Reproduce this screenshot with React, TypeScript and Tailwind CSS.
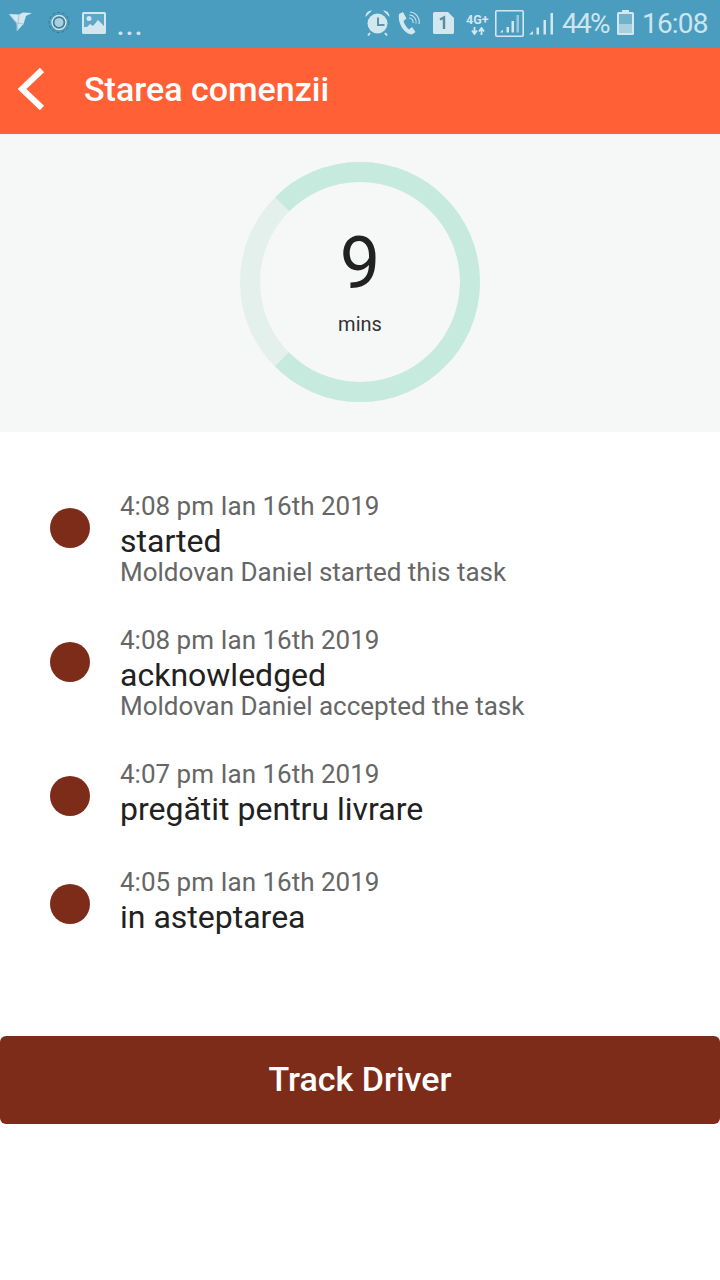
import React from "react";

const ICON = "#d3e7ef";
const DARK = "#5f93aa";

function Bird() {
  return (
    <svg width="24" height="28" viewBox="0 0 24 28" className="shrink-0">
      <path d="M0 4 L10 4.500 L14 2.500 L23 3 L17 6 L14.500 14 L8 21 L7.500 13 Z" fill={ICON} />
      <path d="M0 4 L7.500 13 L14.500 14 M10 4.500 L8 21" fill="none" stroke="#9cc8da" strokeWidth="1" />
    </svg>
  );
}
function Target() {
  return (
    <svg width="24" height="28" viewBox="0 0 24 28" className="shrink-0">
      <circle cx="12" cy="12.500" r="10" fill="none" stroke="#2f6f8a" strokeWidth="0.8" strokeDasharray="3 2" />
      <circle cx="12" cy="12.500" r="8" fill="#3c7f9c" />
      <circle cx="12" cy="12.500" r="7" fill="none" stroke={ICON} strokeWidth="1.500" />
      <circle cx="12" cy="12.500" r="4.500" fill="#a9d0e0" />
    </svg>
  );
}
function Picture() {
  return (
    <svg width="24" height="28" viewBox="0 0 24 28" className="shrink-0">
      <rect x="0" y="2" width="24" height="22" rx="1.500" fill={ICON} />
      <rect x="2" y="4" width="20" height="13" fill="#5ea8c7" />
      <circle cx="7" cy="8.500" r="2.500" fill={ICON} />
      <path d="M2 20 L8 14 L11 16 L16 10 L22 16 V22 H2 Z" fill={ICON} />
    </svg>
  );
}
function Alarm() {
  return (
    <svg width="26" height="28" viewBox="0 0 26 28" className="shrink-0">
      <circle cx="12.500" cy="13.500" r="10" fill={ICON} />
      <path d="M0.500 7 C0.500 3 3 0.500 7 0.500 Z M24.500 7 C24.500 3 22 0.500 18 0.500 Z" fill={ICON} />
      <path d="M5 23 L3 25.500 M20 23 L22 25.500" stroke={ICON} strokeWidth="2" />
      <path d="M13 7.500 V15 H19.500" fill="none" stroke={DARK} strokeWidth="2" />
    </svg>
  );
}
function Phone() {
  return (
    <svg width="24" height="28" viewBox="0 0 24 28" className="shrink-0">
      <path d="M2 4 L6 2 L9.500 8.500 L6.500 11 C7.500 14.500 9.500 17.500 12 19.500 L15 17 L18.500 22 L15 24.500 C7 24 0.500 13 2 4 Z" fill={ICON} />
      <path d="M12 8a4 4 0 0 1 4 5M12.500 5a7 7 0 0 1 6.500 8.500M13 2a10 10 0 0 1 9 12" fill="none" stroke={ICON} strokeWidth="1.100" />
    </svg>
  );
}
function Sim() {
  return (
    <svg width="21" height="28" viewBox="0 0 21 28" className="shrink-0">
      <path d="M1.500 2 H15 L21 8 V22.500 A1.500 1.500 0 0 1 19.500 24 H1.500 A1.500 1.500 0 0 1 0 22.500 V3.500 A1.500 1.500 0 0 1 1.500 2 Z" fill={ICON} />
      <path d="M7 9.500 L11 7.500 V19" fill="none" stroke="#5b8ba0" strokeWidth="2.400" />
    </svg>
  );
}
function Lte() {
  return (
    <div className="relative h-[28px] w-[26px] shrink-0">
      <span className="absolute left-0 top-[3px] font-['Roboto',sans-serif] text-[12.500px] leading-[13px] font-bold text-[#d3e7ef]">4G+</span>
      <svg width="14" height="8" viewBox="0 0 14 8" className="absolute left-[5px] top-[17px]">
        <path d="M3.500 0 V6 M1 3.500 L3.500 7 L6 3.500 M10.500 8 V2 M8 4.500 L10.500 1 L13 4.500" fill="none" stroke={ICON} strokeWidth="1.800" />
      </svg>
    </div>
  );
}
function BoxSignal() {
  return (
    <svg width="29" height="28" viewBox="0 0 29 28" className="shrink-0">
      <rect x="0.800" y="0.800" width="27.400" height="25.400" rx="1" fill="none" stroke={ICON} strokeWidth="1.600" />
      <path d="M5 22.500 L8 19.500 V22.500 Z M11.500 22.500 V17 H14 V22.500 Z M16.500 22.500 V11 H19 V22.500 Z" fill={ICON} />
      <rect x="21.500" y="5" width="2.500" height="17.500" fill="#9cc8da" />
    </svg>
  );
}
function PlainSignal() {
  return (
    <svg width="26" height="28" viewBox="0 0 26 28" className="shrink-0">
      <path d="M1 24.500 L5 21 V24.500 Z M8.500 24.500 V17.500 H11 V24.500 Z M15.500 24.500 V10 H18 V24.500 Z M22.500 24.500 V3 H25 V24.500 Z" fill={ICON} />
    </svg>
  );
}
function Battery() {
  return (
    <svg width="17" height="28" viewBox="0 0 17 28" className="shrink-0">
      <rect x="5" y="0" width="7" height="3" fill={ICON} />
      <rect x="0" y="2" width="17" height="23" rx="1.500" fill={ICON} />
      <rect x="2" y="4" width="13" height="10" fill="#6fb2cc" />
      <rect x="2" y="14" width="13" height="9" fill="#a9d0e0" />
    </svg>
  );
}

function Ring() {
  const r = 110;
  const c = 2 * Math.PI * r;
  return (
    <svg width="240" height="240" viewBox="0 0 240 240" className="-rotate-[135deg]">
      <circle cx="120" cy="120" r={r} fill="none" stroke="#e3f0ec" strokeWidth="20" />
      <circle
        cx="120"
        cy="120"
        r={r}
        fill="none"
        stroke="#c6ebde"
        strokeWidth="20"
        strokeDasharray={`${c * 0.75} ${c * 0.25}`}
      />
    </svg>
  );
}

type Entry = { time: string; title: string; note?: string };
const entries: Entry[] = [
  { time: "4:08 pm Ian 16th 2019", title: "started", note: "Moldovan Daniel started this task" },
  { time: "4:08 pm Ian 16th 2019", title: "acknowledged", note: "Moldovan Daniel accepted the task" },
  { time: "4:07 pm Ian 16th 2019", title: "pregătit pentru livrare" },
  { time: "4:05 pm Ian 16th 2019", title: "in asteptarea" },
];

export default function App() {
  return (
    <div className="flex h-[1280px] w-[720px] flex-col overflow-hidden bg-white font-['Roboto',sans-serif]">
      <div className="flex h-[48px] items-center justify-between bg-[#4a9dbf] pl-[9px] pr-[12px] text-[#cfe5ee]">
        <div className="flex items-center">
          <Bird />
          <div className="ml-[14px]"><Target /></div>
          <div className="ml-[11px]"><Picture /></div>
          <span className="ml-[11px] mt-[6px] text-[24px] font-bold leading-[24px] tracking-[2px]">...</span>
        </div>
        <div className="flex items-center">
          <Alarm />
          <div className="ml-[6px]"><Phone /></div>
          <div className="ml-[12px]"><Sim /></div>
          <div className="ml-[12px]"><Lte /></div>
          <div className="ml-[3px]"><BoxSignal /></div>
          <div className="ml-[4px]"><PlainSignal /></div>
          <span className="ml-[8px] w-[48px] whitespace-nowrap text-[28px] leading-[36px] tracking-[-1.700px]">44%</span>
          <div className="ml-[7px]"><Battery /></div>
          <span className="ml-[8px] w-[66px] whitespace-nowrap text-[28px] leading-[36px] tracking-[-0.800px]">16:08</span>
        </div>
      </div>

      <div className="flex h-[86px] items-center bg-[#ff6035] pb-[4px]">
        <svg width="30" height="46" viewBox="0 0 30 46" className="ml-[16px] shrink-0">
          <path d="M26 4 L6 23 L26 42" fill="none" stroke="#fff" strokeWidth="6" />
        </svg>
        <span className="ml-[38px] text-[34px] font-medium leading-[40px] text-white">Starea comenzii</span>
      </div>

      <div className="flex h-[298px] items-center justify-center bg-[#f6f7f7] pb-[2px]">
        <div className="relative h-[240px] w-[240px]">
          <Ring />
          <div className="absolute inset-0 flex flex-col items-center pt-[60px]">
            <span className="text-[72px] leading-[84px] text-[#212121]">9</span>
            <span className="mt-[6px] text-[20px] leading-[24px] text-[#333333]">mins</span>
          </div>
        </div>
      </div>

      <div className="flex flex-col gap-[38px] pt-[58px]">
        {entries.map((e) => (
          <div key={e.time + e.title} className="flex items-start pl-[50px]">
            <div className="mt-[18px] h-[40px] w-[40px] shrink-0 rounded-full bg-[#7d2c1a]" />
            <div className="ml-[30px] flex flex-col">
              <span className="text-[26px] leading-[32px] text-[#666666]">{e.time}</span>
              <span className="text-[32px] leading-[38px] text-[#212121]">{e.title}</span>
              {e.note && <span className="pb-[2px] text-[26px] leading-[24px] text-[#666666]">{e.note}</span>}
            </div>
          </div>
        ))}
      </div>

      <div className="mt-auto mb-[156px] flex h-[88px] items-center justify-center rounded-[6px] bg-[#7d2c1a] pb-[2px]">
        <span className="text-[34px] font-medium leading-[40px] text-white">Track Driver</span>
      </div>
    </div>
  );
}
